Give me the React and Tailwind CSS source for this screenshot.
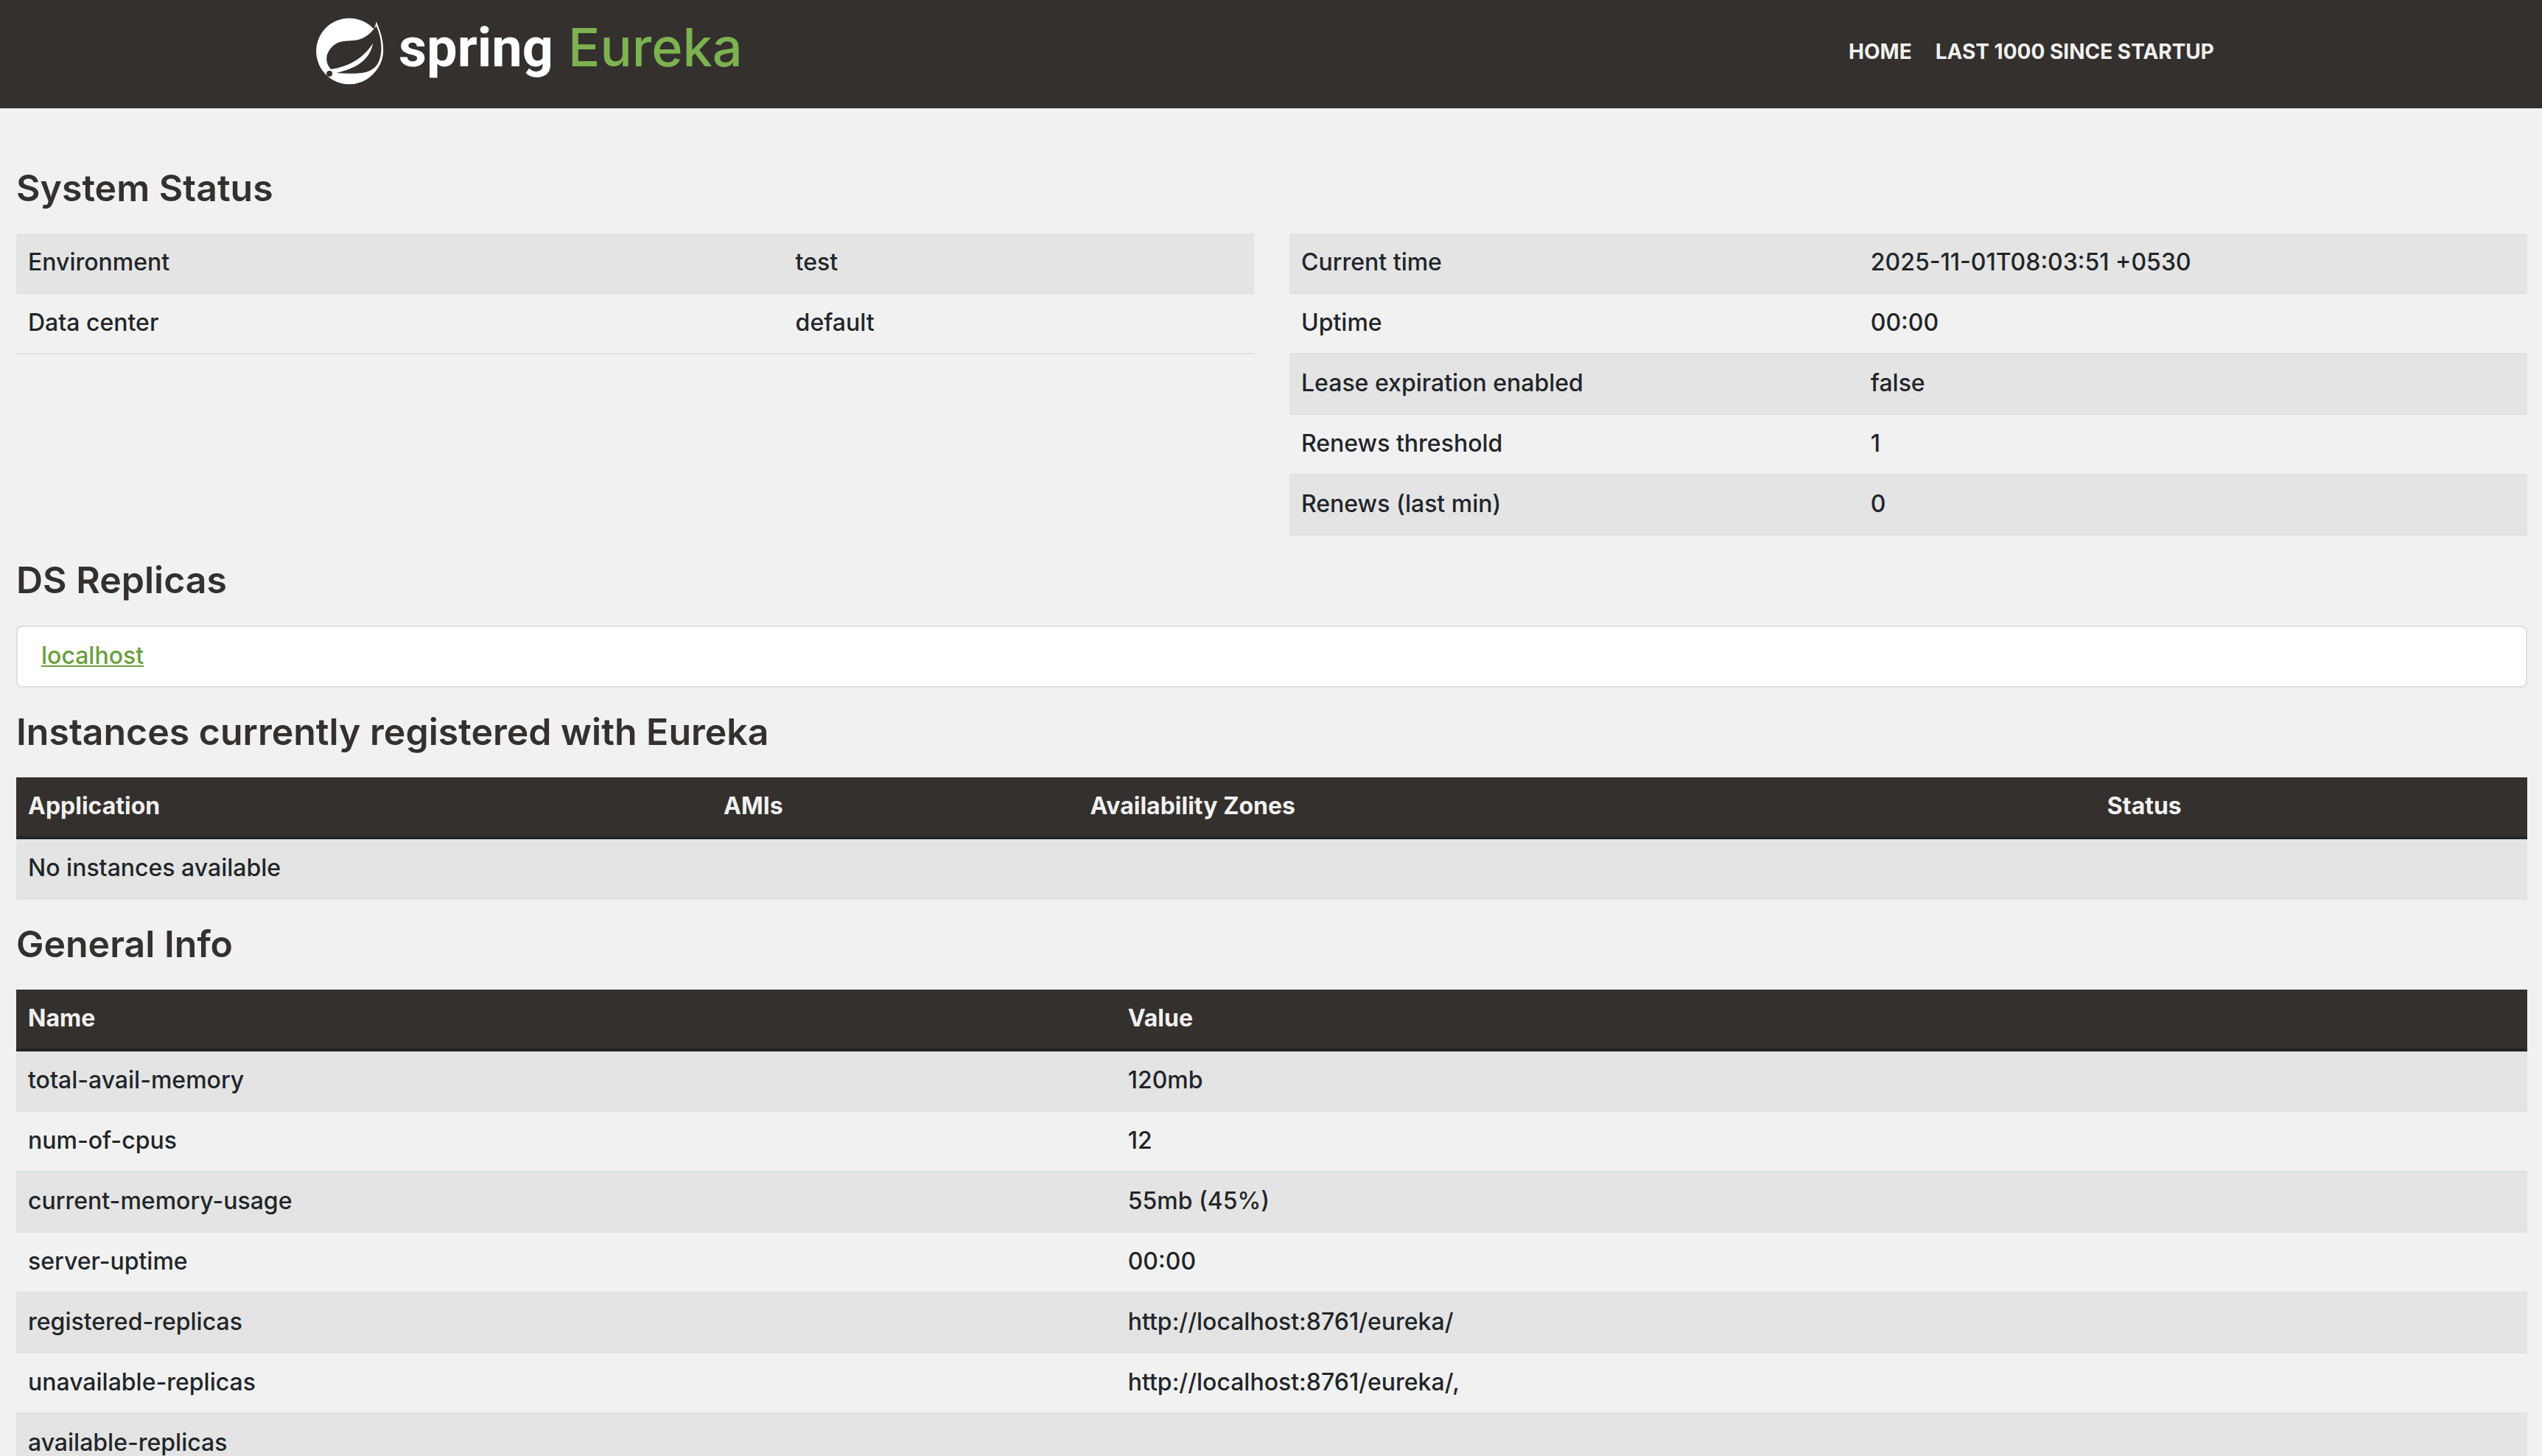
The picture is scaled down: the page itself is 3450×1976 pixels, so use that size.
import React from "react";

const SYSTEM_LEFT = [
  ["Environment", "test"],
  ["Data center", "default"],
];

const SYSTEM_RIGHT = [
  ["Current time", "2025-11-01T08:03:51 +0530"],
  ["Uptime", "00:00"],
  ["Lease expiration enabled", "false"],
  ["Renews threshold", "1"],
  ["Renews (last min)", "0"],
];

const GENERAL_INFO = [
  ["total-avail-memory", "120mb"],
  ["num-of-cpus", "12"],
  ["current-memory-usage", "55mb (45%)"],
  ["server-uptime", "00:00"],
  ["registered-replicas", "http://localhost:8761/eureka/"],
  ["unavailable-replicas", "http://localhost:8761/eureka/,"],
  ["available-replicas", ""],
];

function SpringLeaf() {
  return (
    <svg viewBox="30 28 276 274" className="mt-6 h-[91px] w-[92px] shrink-0" aria-hidden="true">
      <circle cx="165" cy="165" r="135" fill="#fff" />
      <path
        d="M276 44 C292 84 304 118 304 160 C304 196 292 226 270 250 L225 215 L240 110 C258 92 270 70 276 44 Z"
        fill="#fff"
      />
      <path
        d="M275 62 C250 98 222 121 170 122 C140 123 114 125 92 150 C66 178 66 212 90 239 C160 230 222 195 262 133 C252 186 214 232 112 254 C160 257 205 258 235 250 C280 238 296 200 296 150 C295 116 287 86 275 62 Z"
        fill="#34302d"
      />
      <circle cx="84" cy="257" r="12" fill="#34302d" />
    </svg>
  );
}

function Header() {
  return (
    <header className="mb-12 bg-[#34302d]">
      <div className="mx-auto flex h-[147px] max-w-[2640px] items-start justify-between px-6">
        <a href="#" className="flex items-start gap-5">
          <SpringLeaf />
          <span className="flex items-baseline gap-5 pt-7 leading-[72px]">
            <span className="font-[Roboto,sans-serif] text-[74px] font-bold text-white">spring</span>
            <span className="text-[72px] font-medium text-[#7db250]">Eureka</span>
          </span>
        </a>
        <nav className="flex pt-[50px] text-[28px] leading-10 font-bold text-[#f1f1f1]">
          <a href="#" className="px-4">HOME</a>
          <a href="#" className="px-4">LAST 1000 SINCE STARTUP</a>
        </nav>
      </div>
    </header>
  );
}

function Heading({ children }) {
  return (
    <h1 className="pt-[30px] pb-8 text-[50px] leading-[60px] font-semibold text-[#34302d]">{children}</h1>
  );
}

function Row({ cells }) {
  return (
    <tr className="odd:bg-[#e4e4e4]">
      {cells.map((cell, i) => (
        <td key={i} className="px-4 pt-[15px] pb-[17px]">{cell}</td>
      ))}
    </tr>
  );
}

function DataTable({ head, rows, widths, children }) {
  return (
    <table className="w-full table-fixed border-separate border-spacing-0 [&_td]:border-b-2 [&_td]:border-[#dee2e6]">
      <colgroup>
        {widths.map((w, i) => (
          <col key={i} className={w} />
        ))}
      </colgroup>
      {head && (
        <thead className="bg-[#34302d] text-[#f1f1f1]">
          <tr>
            {head.map((h) => (
              <th key={h} scope="col" className="border-b-4 border-[#212529] px-4 pt-[15px] pb-[17px] text-left font-bold">
                {h}
              </th>
            ))}
          </tr>
        </thead>
      )}
      <tbody>
        {rows && rows.map((r) => <Row key={r[0]} cells={r} />)}
        {children}
      </tbody>
    </table>
  );
}

export default function App() {
  return (
    <div className="min-h-screen bg-[#f1f1f1] font-[Inter,sans-serif] text-[32px] leading-[48px] font-medium text-[#212529]">
      <Header />
      <main className="pr-5 pl-[22px]">
        <Heading>System Status</Heading>
        <div className="grid grid-cols-2 items-start gap-12">
          <DataTable rows={SYSTEM_LEFT} widths={["w-[62%]", "w-[38%]"]} />
          <DataTable rows={SYSTEM_RIGHT} widths={["w-[46%]", "w-[54%]"]} />
        </div>

        <Heading>DS Replicas</Heading>
        <ul className="rounded-lg border-2 border-[#dfdfdf] bg-white">
          <li className="px-8 pt-[15px] pb-[17px]">
            <a href="#" className="text-[#69a03d] underline decoration-2 underline-offset-2">localhost</a>
          </li>
        </ul>

        <Heading>Instances currently registered with Eureka</Heading>
        <DataTable
          head={["Application", "AMIs", "Availability Zones", "Status"]}
          widths={["w-[27.7%]", "w-[14.6%]", "w-[40.5%]", "w-[17.2%]"]}
        >
          <tr className="bg-[#e4e4e4]">
            <td colSpan={4} className="px-4 pt-[15px] pb-[17px]">No instances available</td>
          </tr>
        </DataTable>

        <Heading>General Info</Heading>
        <DataTable head={["Name", "Value"]} rows={GENERAL_INFO} widths={["w-[43.8%]", "w-[56.2%]"]} />
      </main>
    </div>
  );
}
